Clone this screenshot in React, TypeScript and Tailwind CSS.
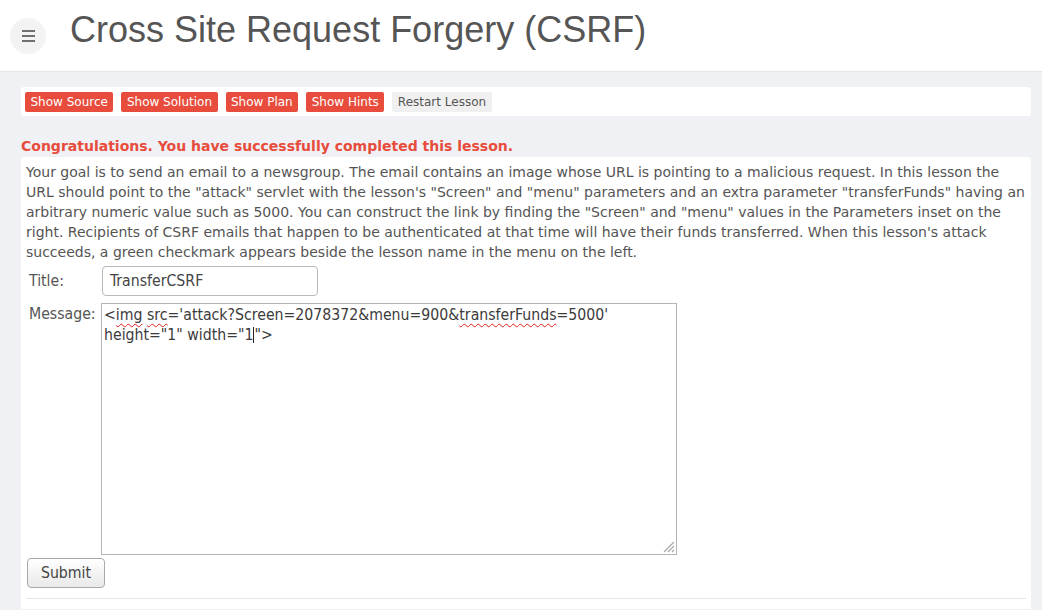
const condensed = "font-['DejaVu_Sans_Condensed','DejaVu_Sans',sans-serif] [font-stretch:condensed]";

function Squiggle({ children }: { children: React.ReactNode }) {
  return (
    <span className="underline decoration-wavy decoration-[#e02020] decoration-1 underline-offset-[3px]">
      {children}
    </span>
  );
}

export default function App() {
  return (
    <div className="min-h-screen bg-[#f0f1f5] font-['DejaVu_Sans',sans-serif] text-[#555]">
      {/* Header */}
      <header className="relative h-[72px] bg-white border-b border-[#e3e5ea]">
        <button className="absolute left-[10px] top-[18px] w-9 h-9 rounded-full bg-[#f3f3f3] flex flex-col items-center justify-center gap-[3px]">
          <span className="block w-[13px] h-[2px] bg-[#6f6f6f]" />
          <span className="block w-[13px] h-[2px] bg-[#6f6f6f]" />
          <span className="block w-[13px] h-[2px] bg-[#6f6f6f]" />
        </button>
        <h1 className="absolute left-[70px] top-[12px] leading-none text-[36px] font-['Liberation_Sans',Arial,sans-serif] font-normal text-[#555]">
          Cross Site Request Forgery (CSRF)
        </h1>
      </header>

      <main className="ml-[21px] mr-[11px] pt-[15px]">
        {/* Lesson buttons */}
        <div className="bg-white rounded-[3px] h-[29px] px-[4px] flex items-center gap-[8px]">
          <LessonButton label="Show Source" />
          <LessonButton label="Show Solution" />
          <LessonButton label="Show Plan" />
          <LessonButton label="Show Hints" />
          <button className="h-[20px] px-[5.5px] rounded-[2px] bg-[#f0f0f0] text-[12px] leading-none text-[#555]">
            Restart Lesson
          </button>
        </div>

        <p className="mt-[22px] text-[14px] leading-[17px] font-bold text-[#e74c3c]">
          Congratulations. You have successfully completed this lesson.
        </p>

        {/* Lesson content */}
        <div className="mt-[2px] bg-white rounded-t-[3px] px-[5px] pt-[5px] pb-[10px]">
          <p className="text-[14px] leading-[20px] text-[#555]">
            Your goal is to send an email to a newsgroup. The email contains an
            image whose URL is pointing to a malicious request. In this lesson
            the URL should point to the "attack" servlet with the lesson's
            "Screen" and "menu" parameters and an extra parameter
            "transferFunds" having an arbitrary numeric value such as 5000. You
            can construct the link by finding the "Screen" and "menu" values in
            the Parameters inset on the right. Recipients of CSRF emails that
            happen to be authenticated at that time will have their funds
            transferred. When this lesson's attack succeeds, a green checkmark
            appears beside the lesson name in the menu on the left.
          </p>

          <div className={`${condensed} text-[15.7px] text-[#555]`}>
            <div className="flex items-center mt-[4px]">
              <label className="w-[76px] pl-[3px]">Title:</label>
              <div className="w-[216px] h-[30px] border border-[#b8b8b8] rounded-[4px] px-[7px] flex items-center text-[#444]">
                TransferCSRF
              </div>
            </div>

            <div className="flex items-start mt-[7px]">
              <label className="w-[75px] pl-[3px] -mt-[1px]">Message:</label>
              <div className="relative w-[576px] h-[252px] border border-[#b4b4b4] px-[2px] pt-[1px] leading-[20px] text-[#3b3b3b]">
                &lt;<Squiggle>img</Squiggle> <Squiggle>src</Squiggle>
                ='attack?Screen=2078372&amp;menu=900&amp;
                <Squiggle>transferFunds</Squiggle>=5000'
                <br />
                height="1" width="1
                <span className="inline-block w-px h-[16px] bg-[#222] align-[-3px]" />
                "&gt;
                <svg
                  className="absolute right-[1px] bottom-[1px]"
                  width="13"
                  height="13"
                  viewBox="0 0 13 13"
                >
                  <path d="M12 2 L2 12 M12 6 L6 12 M12 10 L10 12" stroke="#a8a8a8" strokeWidth="1.2" />
                </svg>
              </div>
            </div>

            <button className="mt-[3px] ml-[1px] w-[78px] h-[30px] rounded-[4px] border border-[#a9a9a9] bg-gradient-to-b from-[#ffffff] to-[#e9e9e9] text-[#444]">
              Submit
            </button>
          </div>

          <hr className="mt-[10px] border-t border-[#e6e6e6]" />
        </div>
      </main>
    </div>
  );
}

function LessonButton({ label }: { label: string }) {
  return (
    <button className="h-[20px] px-[5.5px] rounded-[2px] bg-[#e74c3c] text-[12px] leading-none text-white">
      {label}
    </button>
  );
}
